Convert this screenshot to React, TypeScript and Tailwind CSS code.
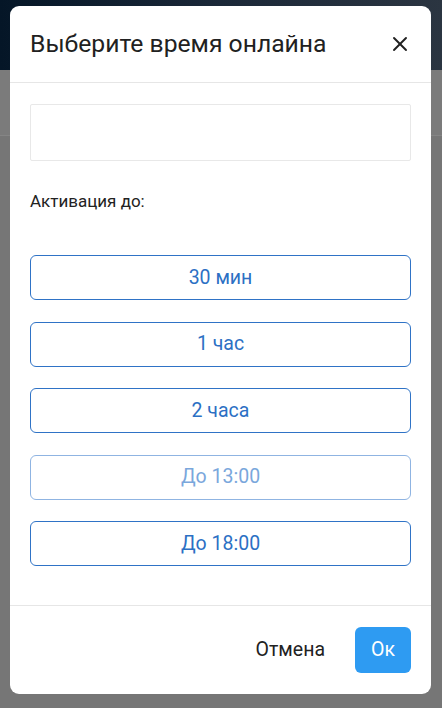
import { X } from 'lucide-react';

const OPTIONS = [
  { label: '30 мин', disabled: false },
  { label: '1 час', disabled: false },
  { label: '2 часа', disabled: false },
  { label: 'До 13:00', disabled: true },
  { label: 'До 18:00', disabled: false },
];

export default function App() {
  return (
    <div className="relative w-[442px] h-[708px] overflow-hidden bg-[#767676] font-['Roboto',sans-serif]">
      {/* page behind the overlay */}
      <div className="h-[70px] bg-gradient-to-r from-[#051627] via-[#1b2838] to-[#2b3541]" />
      <div className="h-[66px] border-b border-[#858585] bg-[#7b7b7b]" />

      <div className="absolute left-[10px] top-[6px] w-[421px] h-[688px] bg-white rounded-[9px] flex flex-col">
        <div className="h-[77px] flex items-center justify-between pl-[20px] pr-[19px] border-b border-[#e6e6e6]">
          <span className="text-[24.7px] text-[#212121] leading-none">Выберите время онлайна</span>
          <X size={24} strokeWidth={1.9} className="text-[#212121]" />
        </div>

        <div className="flex-1 px-[20px] pt-[21px]">
          <div className="h-[57px] border border-[#e8e8e8] rounded-[2px]" />
          <div className="mt-[32px] text-[17px] text-[#222] leading-none">Активация до:</div>
          <div className="mt-[45px] flex flex-col gap-[21.5px]">
            {OPTIONS.map(o => (
              <button
                key={o.label}
                className={`h-[45px] rounded-[6px] border text-[19.5px] ${
                  o.disabled
                    ? 'border-[#8fb4e2] text-[#7aa7dc]'
                    : 'border-[#2f73c6] text-[#2c70c4]'
                }`}
              >
                {o.label}
              </button>
            ))}
          </div>
        </div>

        <div className="h-[89px] border-t border-[#e6e6e6] flex items-center justify-end pr-[20px] gap-[30px]">
          <span className="text-[19.5px] text-[#222]">Отмена</span>
          <button className="w-[56px] h-[46px] rounded-[6px] bg-[#2e9bf2] text-white text-[19.5px]">Ок</button>
        </div>
      </div>
    </div>
  );
}
